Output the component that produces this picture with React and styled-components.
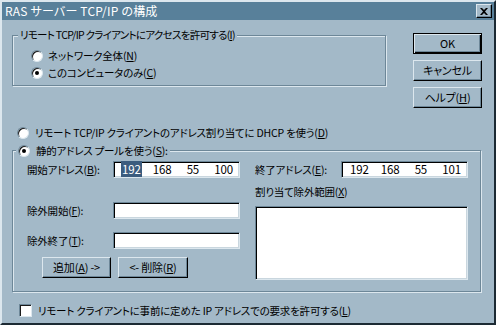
import styled, { createGlobalStyle } from "styled-components";

const face = "#a3b9c8";
const hilite = "#dce7ee";
const shadow = "#6d8798";
const title = "#58809a";

const GlobalStyle = createGlobalStyle`
  html, body {
    margin: 0;
    padding: 0;
    background: ${face};
  }
  body {
    font-family: "Noto Sans CJK JP", "Noto Sans", sans-serif;
    font-size: 10.5px;
    font-weight: 400;
    letter-spacing: -0.2px;
    font-feature-settings: "palt";
    color: #000;
  }
`;

const Window = styled.div`
  width: 496px;
  height: 325px;
  box-sizing: border-box;
  background: ${face};
  border: 2px solid;
  border-color: ${hilite} #1c2a33 #1c2a33 ${hilite};
  display: flex;
  flex-direction: column;
`;

const TitleBar = styled.div`
  height: 18px;
  background: ${title};
  color: #fff;
  display: flex;
  align-items: center;
  padding: 0 2px 0 3px;
  line-height: 18px;
`;

const TitleText = styled.span`
  flex: 1;
  font-size: 12px;
  letter-spacing: 0.2px;
`;

const CloseButton = styled.div`
  width: 16px;
  height: 14px;
  box-sizing: border-box;
  background: ${face};
  border: 1px solid;
  border-color: ${hilite} #000 #000 ${hilite};
  box-shadow: inset -1px -1px 0 ${shadow};
  display: flex;
  align-items: center;
  justify-content: center;
`;

const Body = styled.div`
  flex: 1;
  display: flex;
  flex-direction: column;
  padding-left: 10px;
`;

const TopRow = styled.div`
  display: flex;
  align-items: flex-start;
`;

const GroupBox = styled.div`
  position: relative;
  box-sizing: border-box;
  width: ${(p) => p.$w}px;
  height: ${(p) => p.$h}px;
  margin-top: ${(p) => p.$top}px;
  border: 1px solid ${shadow};
  box-shadow: inset 1px 1px 0 ${hilite}, 1px 1px 0 ${hilite};
`;

const Legend = styled.div`
  position: absolute;
  top: -9px;
  left: ${(p) => p.$left}px;
  padding: 0 2px;
  background: ${face};
  line-height: 16px;
  white-space: nowrap;
  letter-spacing: ${(p) => p.$spacing ?? -0.2}px;
`;

const RadioList = styled.div`
  display: flex;
  flex-direction: column;
  padding: 11px 0 0 18px;
`;

const Row = styled.label`
  display: flex;
  align-items: center;
  gap: ${(p) => p.$gap || 5}px;
  height: 17px;
  line-height: 16px;
  white-space: nowrap;
  margin-left: ${(p) => p.$left || 0}px;
  margin-top: ${(p) => p.$top || 0}px;
`;

const Radio = styled.span`
  position: relative;
  width: 12px;
  height: 12px;
  box-sizing: border-box;
  border-radius: 50%;
  background: #fff;
  border: 1px solid;
  border-color: ${shadow} ${hilite} ${hilite} ${shadow};
  box-shadow: inset 1px 1px 0 #1a1a1a;
  flex: none;
  &::after {
    content: "";
    display: ${(p) => (p.$on ? "block" : "none")};
    position: absolute;
    left: 3px;
    top: 3px;
    width: 4px;
    height: 4px;
    border-radius: 50%;
    background: #000;
  }
`;

const Check = styled.span`
  width: 13px;
  height: 13px;
  box-sizing: border-box;
  background: #fff;
  border: 1px solid;
  border-color: ${shadow} ${hilite} ${hilite} ${shadow};
  box-shadow: inset 1px 1px 0 #1a1a1a;
  flex: none;
`;

const U = styled.span`
  text-decoration: underline;
  text-underline-offset: 1px;
`;

const ButtonColumn = styled.div`
  display: flex;
  flex-direction: column;
  gap: 6px;
  margin: 13px 0 0 27px;
`;

const Button = styled.button`
  width: ${(p) => p.$w || 69}px;
  height: 21px;
  box-sizing: border-box;
  padding: 0;
  font: inherit;
  font-size: 11px;
  letter-spacing: inherit;
  font-feature-settings: inherit;
  color: #000;
  background: ${face};
  line-height: 17px;
  border: 1px solid;
  border-color: ${(p) =>
    p.$default ? "#000" : `${hilite} #000 #000 ${hilite}`};
  box-shadow: ${(p) =>
    p.$default
      ? `inset 1px 1px 0 ${hilite}, inset -1px -1px 0 #000, inset -2px -2px 0 ${shadow}`
      : `inset -1px -1px 0 ${shadow}`};
  white-space: nowrap;
`;

const StaticGroup = styled(GroupBox)`
  display: flex;
  gap: 15px;
  padding: 10px 0 0 14px;
`;

const Column = styled.div`
  width: 213px;
  display: flex;
  flex-direction: column;
`;

const FieldRow = styled.div`
  display: flex;
  align-items: center;
  justify-content: space-between;
  height: 17px;
  margin-top: ${(p) => p.$top || 0}px;
  white-space: nowrap;
  line-height: 16px;
`;

const Sunken = styled.div`
  box-sizing: border-box;
  background: #fff;
  border: 1px solid;
  border-color: ${shadow} ${hilite} ${hilite} ${shadow};
  box-shadow: inset 1px 1px 0 #000, inset -1px -1px 0 #c9d6de;
`;

const Field = styled(Sunken)`
  width: 127px;
  height: 17px;
  display: flex;
  align-items: center;
  padding-left: 2px;
  line-height: 13px;
  font-size: 11.5px;
`;

const Octet = styled.span`
  width: 32px;
  text-align: center;
`;

const Selected = styled.span`
  background: #3b5c7e;
  color: #fff;
  padding: 0 1px;
`;

const ListBox = styled(Sunken)`
  width: 213px;
  height: 74px;
  margin-top: 6px;
`;

const ButtonRow = styled.div`
  display: flex;
  gap: 7px;
  margin: 8px 0 0 15px;
`;

const SubLabel = styled.div`
  height: 16px;
  line-height: 16px;
  margin-top: 6px;
  white-space: nowrap;
`;

function IpField({ parts, selectFirst }) {
  return (
    <Field>
      {parts.map((p, i) => (
        <Octet key={i}>{i === 0 && selectFirst ? <Selected>{p}</Selected> : p}</Octet>
      ))}
    </Field>
  );
}

export default function App() {
  return (
    <>
      <GlobalStyle />
      <Window>
        <TitleBar>
          <TitleText>RAS サーバー TCP/IP の構成</TitleText>
          <CloseButton>
            <svg width="8" height="7" viewBox="0 0 8 7">
              <path d="M0 0h2l2 2 2-2h2L5 3.5 8 7H6L4 5 2 7H0l3-3.5z" fill="#000" />
            </svg>
          </CloseButton>
        </TitleBar>
        <Body>
          <TopRow>
            <GroupBox $w={374} $h={51} $top={15}>
              <Legend $left={5} $spacing={-0.7}>
                リモート TCP/IP クライアントにアクセスを許可する(<U>I</U>)
              </Legend>
              <RadioList>
                <Row>
                  <Radio />
                  <span>
                    ネットワーク全体(<U>N</U>)
                  </span>
                </Row>
                <Row>
                  <Radio $on />
                  <span>
                    このコンピュータのみ(<U>C</U>)
                  </span>
                </Row>
              </RadioList>
            </GroupBox>
            <ButtonColumn>
              <Button $default>OK</Button>
              <Button>キャンセル</Button>
              <Button>
                ヘルプ(<U>H</U>)
              </Button>
            </ButtonColumn>
          </TopRow>
          <Row $left={5} $top={16} $gap={6}>
            <Radio />
            <span>
              リモート TCP/IP クライアントのアドレス割り当てに DHCP を使う(<U>D</U>)
            </span>
          </Row>
          <StaticGroup $w={469} $h={142} $top={9}>
            <Legend $left={3}>
              <Row $gap={6}>
                <Radio $on />
                <span>
                  静的アドレス プールを使う(<U>S</U>):
                </span>
              </Row>
            </Legend>
            <Column>
              <FieldRow>
                <span>
                  開始アドレス(<U>B</U>):
                </span>
                <IpField parts={["192", "168", "55", "100"]} selectFirst />
              </FieldRow>
              <FieldRow $top={24}>
                <span>
                  除外開始(<U>F</U>):
                </span>
                <Field />
              </FieldRow>
              <FieldRow $top={13}>
                <span>
                  除外終了(<U>T</U>):
                </span>
                <Field />
              </FieldRow>
              <ButtonRow>
                <Button>
                  追加(<U>A</U>) -&gt;
                </Button>
                <Button $w={70}>
                  &lt;- 削除(<U>R</U>)
                </Button>
              </ButtonRow>
            </Column>
            <Column>
              <FieldRow>
                <span>
                  終了アドレス(<U>E</U>):
                </span>
                <IpField parts={["192", "168", "55", "101"]} />
              </FieldRow>
              <SubLabel>
                割り当て除外範囲(<U>X</U>)
              </SubLabel>
              <ListBox />
            </Column>
          </StaticGroup>
          <Row $left={7} $top={10} $gap={6}>
            <Check />
            <span>
              リモート クライアントに事前に定めた IP アドレスでの要求を許可する(<U>L</U>)
            </span>
          </Row>
        </Body>
      </Window>
    </>
  );
}
